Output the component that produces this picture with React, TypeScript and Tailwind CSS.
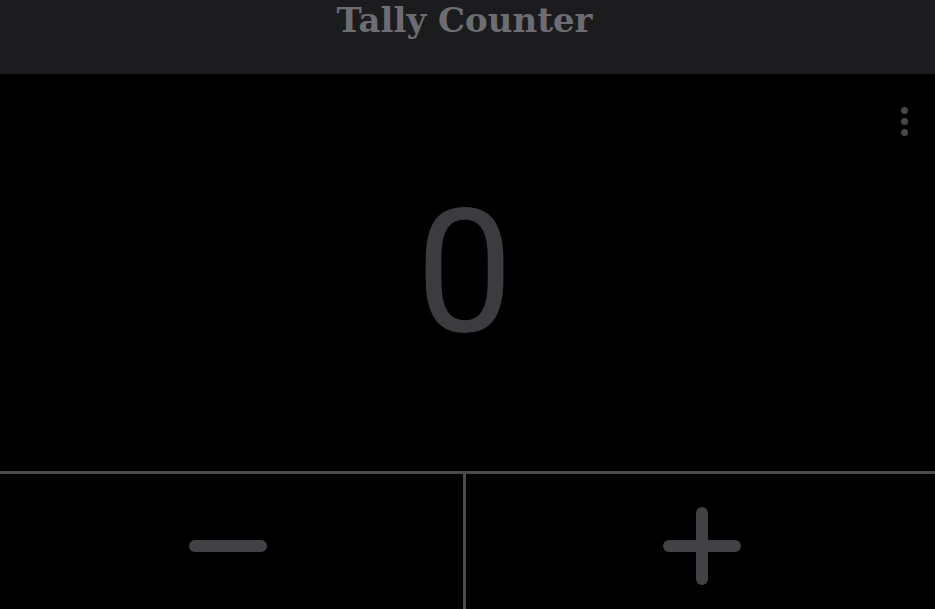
import React, { useState } from 'react';

const App: React.FC = () => {
  const [count, setCount] = useState(0);

  return (
    <div className="h-screen flex flex-col bg-black overflow-hidden">
      <header className="h-[74px] shrink-0 bg-[#1c1c1e] flex justify-center">
        <h1
          className="text-[34px] font-bold text-[#6c6c72] leading-none pt-[3px] pr-[6px]"
          style={{ fontFamily: '"DejaVu Serif", serif' }}
        >
          Tally Counter
        </h1>
      </header>

      <main className="flex-1 relative flex items-center justify-center">
        <button className="absolute top-[33px] right-[27px] flex flex-col gap-[4px] p-0" aria-label="Menu">
          <span className="w-[7px] h-[7px] rounded-full bg-[#48484c]" />
          <span className="w-[7px] h-[7px] rounded-full bg-[#48484c]" />
          <span className="w-[7px] h-[7px] rounded-full bg-[#48484c]" />
        </button>
        <div
          className="text-[173px] leading-none text-[#3c3c40] pr-[6px]"
          style={{ fontFamily: 'Roboto, sans-serif' }}
        >
          {count}
        </div>
      </main>

      <div className="h-[138px] shrink-0 border-t-[3px] border-[#4a4a4f] grid grid-cols-[466px_1fr]">
        <button
          className="flex items-center justify-center border-r-[3px] border-[#4a4a4f] pt-[8px] pr-[7px]"
          onClick={() => setCount(c => c - 1)}
          aria-label="Decrement"
        >
          <svg width="80" height="14" viewBox="0 0 80 14">
            <line x1="7" y1="7" x2="73" y2="7" stroke="#424246" strokeWidth="12" strokeLinecap="round" />
          </svg>
        </button>
        <button
          className="flex items-center justify-center pt-[8px] pl-[3px]"
          onClick={() => setCount(c => c + 1)}
          aria-label="Increment"
        >
          <svg width="80" height="80" viewBox="0 0 80 80">
            <line x1="7" y1="40" x2="73" y2="40" stroke="#424246" strokeWidth="12" strokeLinecap="round" />
            <line x1="40" y1="7" x2="40" y2="73" stroke="#424246" strokeWidth="12" strokeLinecap="round" />
          </svg>
        </button>
      </div>
    </div>
  );
};

export default App;
